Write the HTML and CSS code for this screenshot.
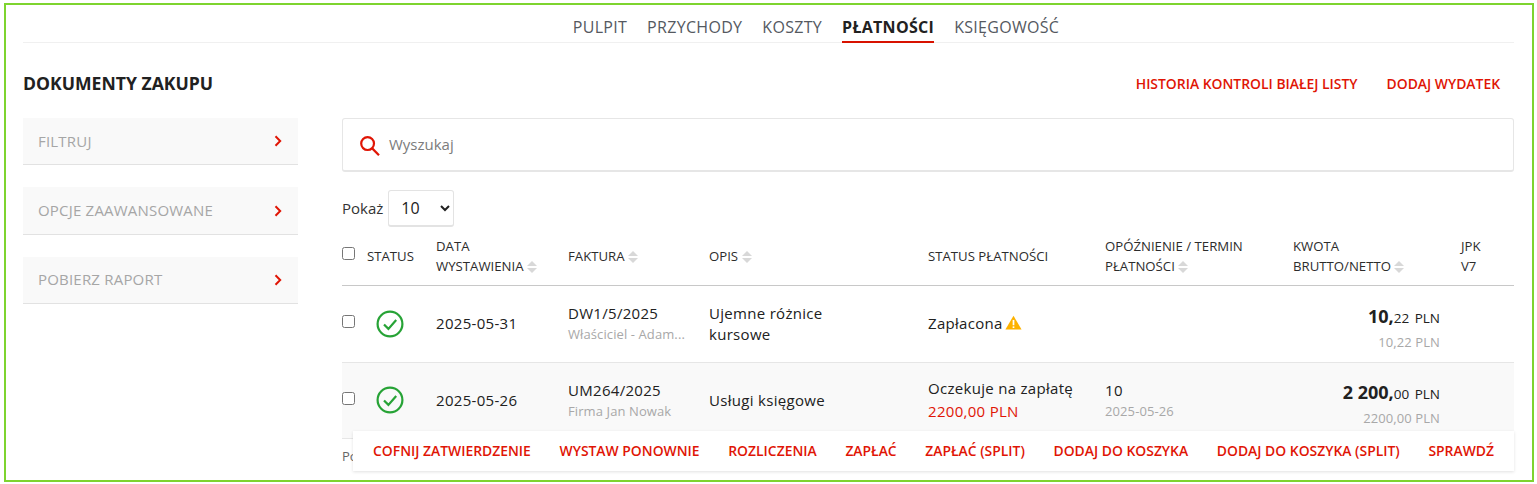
FILE: index.html
```html
<!DOCTYPE html>
<html lang="pl">
<head>
<meta charset="utf-8">
<title>Dokumenty zakupu</title>
<link rel="stylesheet" href="styles.css">
</head>
<body>
<div class="frame">
  <nav class="topnav">
    <a>PULPIT</a><a>PRZYCHODY</a><a>KOSZTY</a><a class="active">PŁATNOŚCI</a><a>KSIĘGOWOŚĆ</a>
  </nav>
  <header class="pagehead">
    <h1>DOKUMENTY ZAKUPU</h1>
    <div class="headlinks"><a>HISTORIA KONTROLI BIAŁEJ LISTY</a><a>DODAJ WYDATEK</a></div>
  </header>
  <div class="columns">
    <aside class="side">
      <div class="panel"><span>FILTRUJ</span><svg class="chev" viewBox="0 0 8 12"><path d="M1.5 1.2 6.2 6 1.5 10.8" /></svg></div>
      <div class="panel"><span>OPCJE ZAAWANSOWANE</span><svg class="chev" viewBox="0 0 8 12"><path d="M1.5 1.2 6.2 6 1.5 10.8" /></svg></div>
      <div class="panel"><span>POBIERZ RAPORT</span><svg class="chev" viewBox="0 0 8 12"><path d="M1.5 1.2 6.2 6 1.5 10.8" /></svg></div>
    </aside>
    <main class="content">
      <div class="search">
        <svg class="loupe" viewBox="0 0 22 22"><circle cx="8.6" cy="8.6" r="6.4"/><path d="M13.2 13.4 20 20.2"/></svg>
        <span>Wyszukaj</span>
      </div>
      <div class="show"><span>Pokaż</span>
        <select class="pagesize"><option>10</option></select>
      </div>
      <table class="docs">
        <colgroup>
          <col class="c1"><col class="c2"><col class="c3"><col class="c4"><col class="c5"><col class="c6"><col class="c7"><col class="c8"><col class="c9">
        </colgroup>
        <thead>
          <tr>
            <th class="chk"><input type="checkbox"></th>
            <th>STATUS</th>
            <th>DATA<br>WYSTAWIENIA <i class="sort"></i></th>
            <th>FAKTURA <i class="sort"></i></th>
            <th>OPIS <i class="sort"></i></th>
            <th>STATUS PŁATNOŚCI</th>
            <th>OPÓŹNIENIE / TERMIN<br>PŁATNOŚCI <i class="sort"></i></th>
            <th>KWOTA<br>BRUTTO/NETTO <i class="sort"></i></th>
            <th>JPK<br>V7</th>
          </tr>
        </thead>
        <tbody>
          <tr class="first">
            <td class="chk"><input type="checkbox"></td>
            <td class="st"><svg class="ok" viewBox="0 0 28 28"><circle cx="14" cy="14" r="12.4"/><path d="M8 14.5l4.4 4.4L20.2 10"/></svg></td>
            <td>2025-05-31</td>
            <td><div>DW1/5/2025</div><div class="sub">Właściciel - Adam...</div></td>
            <td class="desc">Ujemne różnice kursowe</td>
            <td>Zapłacona <svg class="warn" viewBox="0 0 16 14"><path d="M8 .6 15.6 13.6H.4Z"/><rect x="7.2" y="4.6" width="1.6" height="5" fill="#fff"/><rect x="7.2" y="10.6" width="1.6" height="1.6" fill="#fff"/></svg></td>
            <td></td>
            <td class="amt"><div class="gross"><b>10,</b><small>22</small> <span>PLN</span></div><div class="net">10,22 PLN</div></td>
            <td></td>
          </tr>
          <tr class="alt">
            <td class="chk"><input type="checkbox"></td>
            <td class="st"><svg class="ok" viewBox="0 0 28 28"><circle cx="14" cy="14" r="12.4"/><path d="M8 14.5l4.4 4.4L20.2 10"/></svg></td>
            <td>2025-05-26</td>
            <td class="stack"><div>UM264/2025</div><div class="sub">Firma Jan Nowak</div></td>
            <td class="desc">Usługi księgowe</td>
            <td><div>Oczekuje na zapłatę</div><div class="due">2200,00 PLN</div></td>
            <td class="stack"><div>10</div><div class="sub">2025-05-26</div></td>
            <td class="amt"><div class="gross"><b>2 200,</b><small>00</small> <span>PLN</span></div><div class="net">2200,00 PLN</div></td>
            <td></td>
          </tr>
        </tbody>
      </table>
      <div class="foot">Po</div>
    </main>
  </div>
  <div class="actions">
    <a>COFNIJ ZATWIERDZENIE</a><a>WYSTAW PONOWNIE</a><a>ROZLICZENIA</a><a>ZAPŁAĆ</a><a>ZAPŁAĆ (SPLIT)</a><a>DODAJ DO KOSZYKA</a><a>DODAJ DO KOSZYKA (SPLIT)</a><a>SPRAWDŹ</a>
  </div>
</div>
</body>
</html>
```
FILE: styles.css
```css
* { box-sizing: border-box; }
html, body { margin: 0; height: 484px; overflow: hidden; background: #fff; }
body { font-family: "Open Sans", sans-serif; color: #212121; font-size: 14px; padding: 3px 3px 2px 4px; }
.frame { position: relative; height: 479px; border: 2px solid #7ed42f; overflow: hidden; padding: 0 18px 0 17px; }

.topnav { display: flex; justify-content: center; gap: 20px; height: 38px; border-bottom: 1px solid #f0f0f0; padding: 10px 0 0 95px; }
.topnav a { font-size: 16px; letter-spacing: .3px; line-height: 24px; height: 28px; color: #55595f; }
.topnav a.active { color: #212121; font-weight: 700; border-bottom: 2px solid #d81200; }

.pagehead { display: flex; justify-content: space-between; align-items: center; height: 75px; padding-top: 5px; }
h1 { margin: 0; font-size: 17.6px; font-weight: 700; color: #212121; line-height: 24px; }
.headlinks { display: flex; gap: 29px; padding-right: 14px; }
.headlinks a { color: #e01505; font-size: 13.9px; font-weight: 600; }

.columns { display: flex; gap: 44px; }
.side { width: 275px; flex: none; display: flex; flex-direction: column; gap: 22px; }
.panel { height: 47px; background: #f9f9f9; border-bottom: 1px solid #e2e2e2; display: flex; align-items: center; justify-content: space-between; padding: 0 15px; color: #a6a6a6; font-size: 15px; letter-spacing: .2px; }
.panel:nth-child(2) { height: 48px; }
.panel span { line-height: 20px; margin-top: -1px; }
.panel:nth-child(3) span { margin-top: -3px; }
.chev { width: 8px; height: 12px; margin-right: 1px; }
.chev path { fill: none; stroke: #e01505; stroke-width: 2; }

.content { flex: 1; min-width: 0; }
.search { height: 54px; border: 1px solid #e6e6e6; border-bottom-width: 2px; border-radius: 3px; display: flex; align-items: center; padding-left: 16px; gap: 8px; color: #7c7c7c; font-size: 15px; }
.search span { margin-top: -2px; }
.loupe { width: 22px; height: 22px; margin-top: 3px; }
.loupe circle, .loupe path { fill: none; stroke: #e01505; stroke-width: 2.2; }

.show { display: flex; align-items: center; gap: 5px; margin-top: 17px; height: 38px; font-size: 15px; color: #333; }
.pagesize { width: 66px; height: 37px; background: #fff; border: 1px solid #e3e3e3; border-bottom-width: 2px; border-radius: 3px; font-family: "Open Sans", sans-serif; font-size: 16px; color: #212121; padding-left: 8px; }

.docs { width: 1172px; border-collapse: collapse; table-layout: fixed; margin-top: 9px; }
.c1 { width: 25px; } .c2 { width: 69px; } .c3 { width: 132px; } .c4 { width: 141px; } .c5 { width: 219px; }
.c6 { width: 177px; } .c7 { width: 188px; } .c8 { width: 168px; } .c9 { width: 53px; }
.docs th { font-size: 13.2px; font-weight: 400; line-height: 20px; color: #2c2c2c; text-align: left; padding: 0 0 8px 0; vertical-align: middle; height: 49px; border-bottom: 1px solid #c8c8c8; white-space: nowrap; }
.docs td { font-size: 15px; letter-spacing: .3px; line-height: 21px; padding: 0 12px 0 0; height: 76px; vertical-align: middle; border-bottom: 1px solid #e6e6e6; }
.first td { height: 77px; }
.docs td.desc { padding-right: 60px; }
.docs td.stack { padding-top: 2px; }
.docs input { width: 13px; height: 13px; margin: 0; display: block; }
.docs .chk { vertical-align: top; }
.docs th.chk { vertical-align: middle; padding-bottom: 13px; }
.docs td.chk { padding-top: 29px; }
.alt td { background: #f9f9f9; }
.st svg { display: block; margin-left: 9px; }
.ok { width: 28px; height: 28px; }
.ok circle, .ok path { fill: none; stroke: #27a336; stroke-width: 2.2; }
.sub { font-size: 13px; letter-spacing: .1px; color: #a8a8a8; line-height: 21px; white-space: nowrap; }
.due { color: #e01505; margin-top: 2px; }
.warn { width: 17px; height: 15px; vertical-align: -1px; margin-left: -2px; }
.warn path { fill: #fdb200; }
.docs td.amt { text-align: right; padding: 8px 21px 0 0; letter-spacing: 0; }
.gross { font-size: 13.5px; line-height: 24px; }
.gross b { font-size: 18px; }
.gross small { font-size: 13.5px; }
.gross span { margin-left: 2px; }
.net { font-size: 13px; letter-spacing: .1px; color: #a8a8a8; line-height: 20px; margin-top: 2px; }

.foot { font-size: 13px; color: #666; margin-top: 8px; }
.actions { position: absolute; right: 18px; bottom: 9px; width: 1161px; height: 40px; background: #fff; box-shadow: 0 1px 3px rgba(0,0,0,.12); display: flex; align-items: center; justify-content: space-between; padding: 0 20px 2px; }
.actions a { color: #e01505; font-size: 13.9px; font-weight: 600; white-space: nowrap; }

.sort { display: inline-block; width: 10px; height: 12px; vertical-align: -2px; position: relative; }
.sort::before, .sort::after { content: ""; position: absolute; left: 0; border-left: 5px solid transparent; border-right: 5px solid transparent; }
.sort::before { top: 0; border-bottom: 5px solid #d8d8d8; }
.sort::after { bottom: 0; border-top: 5px solid #d8d8d8; }
```
